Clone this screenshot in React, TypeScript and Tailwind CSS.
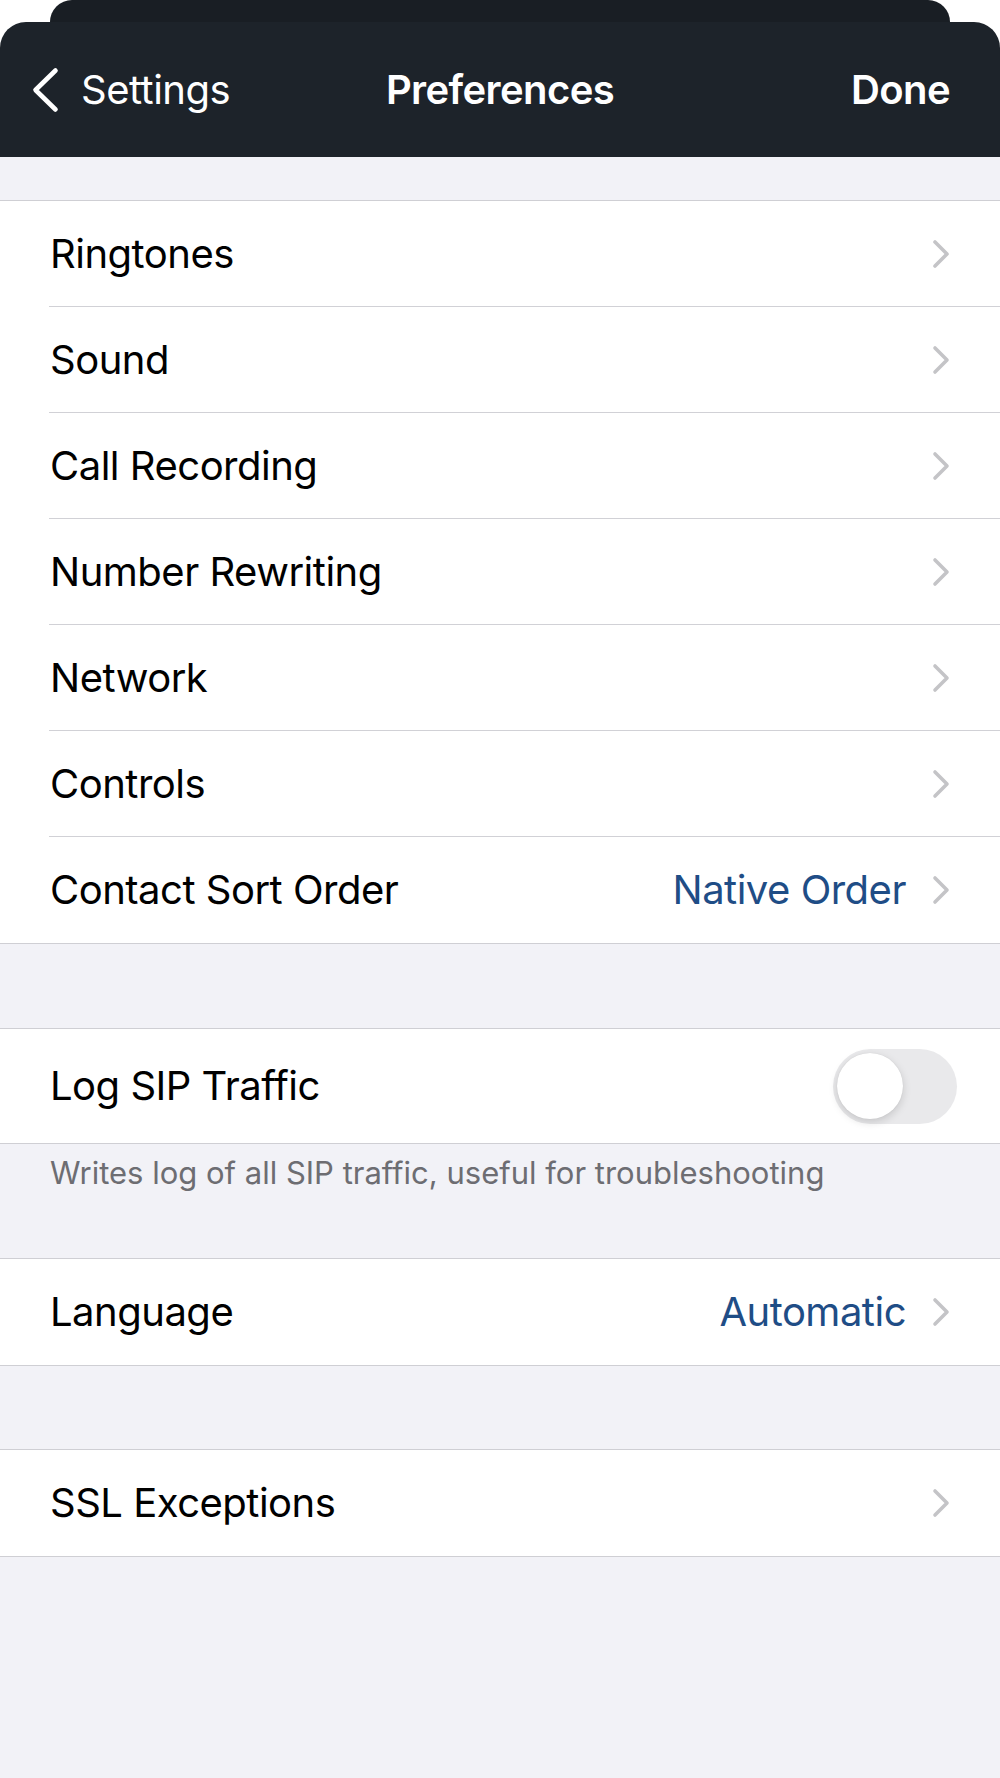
import type { ReactNode } from "react";

const font = { fontFamily: "Inter, 'Noto Sans', sans-serif" };

function Chevron() {
  return (
    <svg width="18" height="30" viewBox="0 0 18 30" className="shrink-0">
      <path
        d="M3 3 L15 15 L3 27"
        fill="none"
        stroke="#c4c4c7"
        strokeWidth="3.6"
        strokeLinecap="round"
        strokeLinejoin="round"
      />
    </svg>
  );
}

function Row({
  label,
  value,
  last,
  right,
  tall,
}: {
  label: string;
  value?: string;
  last?: boolean;
  right?: ReactNode;
  tall?: boolean;
}) {
  return (
    <div className="bg-white pl-[49px]">
      <div
        className={[
          "flex items-center justify-between",
          tall ? "h-[114px] pr-[43px]" : "h-[106px] pr-[50px]",
          !last && "border-b border-[#d1d1d6]",
        ]
          .filter(Boolean)
          .join(" ")}
      >
        <span className="pl-px text-[40px] tracking-[-0.5px] text-black">{label}</span>
        {right ?? (
          <div className="flex items-center gap-[26px]">
            {value && (
              <span className="text-[40px] tracking-[-0.5px] text-[#1f4d86]">{value}</span>
            )}
            <Chevron />
          </div>
        )}
      </div>
    </div>
  );
}

function Group({ children }: { children: ReactNode }) {
  return <div className="border-y border-[#cfcfd4]">{children}</div>;
}

function Switch() {
  return (
    <div className="flex h-[75px] w-[124px] items-center rounded-full bg-[#e9e9eb] px-[4px]">
      <div className="h-[66px] w-[66px] rounded-full bg-white shadow-[0_3px_8px_rgba(0,0,0,0.15),0_0_1px_rgba(0,0,0,0.12)]" />
    </div>
  );
}

export default function App() {
  return (
    <div className="min-h-[1778px] w-[1000px] bg-[#f2f2f7]" style={font}>
      <div className="bg-white">
        <div className="px-[50px]">
          <div className="h-[22px] rounded-t-[22px] bg-[#191e24]" />
        </div>
        <header className="relative flex h-[135px] items-center justify-between rounded-t-[26px] bg-[#1d232a] pl-[31px] pr-[50px] text-white">
          <div className="flex items-center gap-[22px]">
            <svg width="28" height="46" viewBox="0 0 28 46">
              <path
                d="M24.5 3.5 L4.5 23 L24.5 42.5"
                fill="none"
                stroke="white"
                strokeWidth="4.6"
                strokeLinecap="round"
                strokeLinejoin="round"
              />
            </svg>
            <span className="text-[40px] tracking-[-0.5px]">Settings</span>
          </div>
          <span className="absolute left-1/2 -translate-x-1/2 text-[40px] font-semibold tracking-[-0.6px]">
            Preferences
          </span>
          <span className="text-[40px] font-semibold tracking-[-0.6px]">Done</span>
        </header>
      </div>

      <div className="h-[43px]" />
      <Group>
        <Row label="Ringtones" />
        <Row label="Sound" />
        <Row label="Call Recording" />
        <Row label="Number Rewriting" />
        <Row label="Network" />
        <Row label="Controls" />
        <Row label="Contact Sort Order" value="Native Order" last />
      </Group>

      <div className="h-[84px]" />
      <Group>
        <Row label="Log SIP Traffic" last tall right={<Switch />} />
      </Group>
      <div className="h-[114px] px-[50px] pt-[6px] text-[31px] tracking-[0px] text-[#6d6d72]">
        Writes log of all SIP traffic, useful for troubleshooting
      </div>

      <Group>
        <Row label="Language" value="Automatic" last />
      </Group>

      <div className="h-[83px]" />
      <Group>
        <Row label="SSL Exceptions" last />
      </Group>
    </div>
  );
}
